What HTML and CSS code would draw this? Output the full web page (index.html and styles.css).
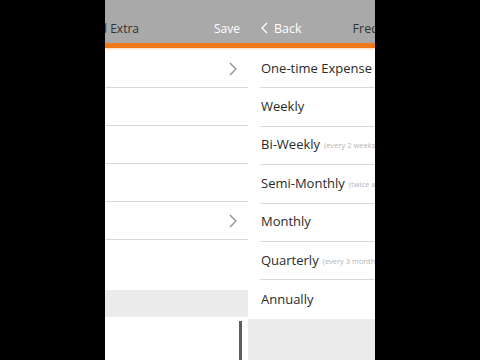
FILE: index.html
```html
<!DOCTYPE html>
<html>
<head>
<meta charset="utf-8">
<link rel="stylesheet" href="styles.css">
</head>
<body>
<div class="stage">
  <div class="matte matte-left"></div>
  <div class="panel panel-left">
    <div class="screen screen-left">
      <header class="nav">
        <div class="nav-title-box"><span class="nav-title">Add Manual Extra</span></div>
        <span class="nav-action">Save</span>
      </header>
      <div class="nav-edge"></div>
      <ul class="list list-left">
        <li class="row"><svg class="chev" viewBox="0 0 8 14" width="8" height="14"><path d="M1 1l6 6-6 6" fill="none" stroke="#8a8a8a" stroke-width="1.2"/></svg></li>
        <li class="row"></li>
        <li class="row"></li>
        <li class="row"></li>
        <li class="row"><svg class="chev" viewBox="0 0 8 14" width="8" height="14"><path d="M1 1l6 6-6 6" fill="none" stroke="#8a8a8a" stroke-width="1.2"/></svg></li>
      </ul>
      <div class="gap"></div>
      <div class="band"></div>
      <div class="field"><span class="scrollbar"></span></div>
    </div>
  </div>
  <div class="panel panel-right">
    <div class="screen">
      <header class="nav nav-grid">
        <span class="nav-back"><svg viewBox="0 0 7 12" width="7" height="12"><path d="M6 1L1 6l5 5" fill="none" stroke="#fff" stroke-width="1.3"/></svg>Back</span>
        <span class="nav-center">Frequency</span>
        <span></span>
      </header>
      <div class="nav-edge"></div>
      <ul class="list list-right">
        <li class="item">One-time Expense</li>
        <li class="item">Weekly</li>
        <li class="item">Bi-Weekly<small class="note">(every 2 weeks)</small></li>
        <li class="item">Semi-Monthly<small class="note">(twice a month)</small></li>
        <li class="item">Monthly</li>
        <li class="item">Quarterly<small class="note">(every 3 months)</small></li>
        <li class="item item-last">Annually</li>
      </ul>
      <div class="rest"></div>
    </div>
  </div>
  <div class="matte"></div>
</div>
</body>
</html>
```

FILE: styles.css
```css
html, body {
  margin: 0;
  padding: 0;
  background: #000;
  height: 360px;
  overflow: hidden;
}
body {
  font-family: "Open Sans", "Noto Sans", sans-serif;
  color: #2a2a2a;
}
.stage {
  display: flex;
  width: 480px;
  height: 360px;
}
.matte {
  flex: 1;
  background: #000;
}
.matte-left {
  flex: 0 0 105px;
}
.panel {
  overflow: hidden;
  height: 360px;
  display: flex;
  background: #fff;
}
.panel-left { width: 143px; }
.panel-right { width: 127px; }
.screen {
  width: 270px;
  flex-shrink: 0;
  display: flex;
  flex-direction: column;
  height: 360px;
}
.screen-left {
  margin-left: -127px;
}
.nav {
  height: 30px;
  padding-top: 13px;
  background: #a9a9a9;
  border-bottom: 5px solid #f07a1a;
  display: flex;
  align-items: center;
  justify-content: space-between;
  font-size: 12px;
  box-sizing: content-box;
}
.nav-title-box {
  width: 161px;
  display: flex;
  justify-content: flex-end;
  white-space: nowrap;
  color: #333;
}
.nav-action {
  color: #fff;
  padding-right: 8px;
}
.nav-edge {
  height: 2px;
  background: linear-gradient(#fbd9bd, #fff);
}
.nav-grid {
  display: grid;
  grid-template-columns: 1fr auto 1fr;
}
.nav-back {
  color: #fff;
  display: flex;
  align-items: center;
  gap: 6px;
  padding-left: 13px;
  font-size: 12.5px;
}
.nav-center {
  color: #333;
  font-size: 12.5px;
}
.list {
  list-style: none;
  margin: 0;
  padding: 0;
}
.row {
  height: 37px;
  border-bottom: 1px solid #d9d9d9;
  display: flex;
  align-items: center;
  justify-content: flex-end;
  padding-right: 11px;
}
.gap {
  height: 50px;
}
.band {
  height: 27px;
  background: #ececec;
}
.field {
  flex: 1;
  display: flex;
  justify-content: flex-end;
  padding-top: 4px;
  padding-right: 6px;
  border-left: 1px solid #f0f0f0;
}
.scrollbar {
  width: 3px;
  background: #5e5e5e;
}
.list-right {
  padding-left: 12px;
}
.item {
  height: 37.4px;
  border-bottom: 1px solid #d9d9d9;
  display: flex;
  align-items: center;
  white-space: nowrap;
  font-size: 13px;
  padding-left: 1px;
  padding-bottom: 2px;
  box-sizing: border-box;
  height: 38.4px;
}
.item-last {
  border-bottom: none;
}
.note {
  font-size: 7.5px;
  color: #b5b5b5;
  margin-left: 4px;
  padding-top: 2px;
}
.rest {
  flex: 1;
  background: #ececec;
}
```
